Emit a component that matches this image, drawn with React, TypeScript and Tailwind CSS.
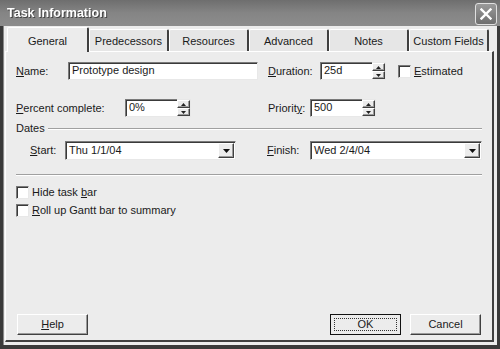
import React from "react";

const sunken = "bg-white border border-t-[#7a7a7a] border-l-[#7a7a7a] border-b-[#e8e8e8] border-r-[#e8e8e8] shadow-[inset_1px_1px_0_#3a3a3a]";
const raised = "bg-[#ececec] border border-t-white border-l-white border-b-[#404040] border-r-[#404040] shadow-[inset_-1px_-1px_0_#9a9a9a]";

function Spinner() {
    return (
        <div className="flex flex-col w-[14px] h-[18px] border-y border-r border-[#e8e8e8]">
            <div className={`${raised} flex-1 flex items-center justify-center`}>
                <svg width="5" height="3" viewBox="0 0 5 3"><polygon points="2.5,0 5,3 0,3" fill="#222" /></svg>
            </div>
            <div className={`${raised} flex-1 flex items-center justify-center`}>
                <svg width="5" height="3" viewBox="0 0 5 3"><polygon points="0,0 5,0 2.5,3" fill="#222" /></svg>
            </div>
        </div>
    );
}

function SpinBox ({ value, width }: { value: string; width: string }) {
    return (
        <div className="flex items-center">
            <div className={`${sunken} ${width} h-[18px] pl-[3px] leading-[15px] border-r-0`}>{value}</div>
            <Spinner />
        </div>
    );
}

function Combo ({ value, width }: { value: string; width: string }) {
    return (
        <div className={`${sunken} ${width} h-[19px] flex items-center`}>
            <span className="flex-1 pl-[3px] leading-[15px]">{value}</span>
            <div className={`${raised} w-[16px] h-[15px] mr-[1px] flex items-center justify-center`}>
                <svg width="7" height="4" viewBox="0 0 7 4"><polygon points="0,0 7,0 3.5,4" fill="#111" /></svg>
            </div>
        </div>
    );
}

function Check () {
    return <div className={`${sunken} w-[13px] h-[13px]`} />;
}

function Tab ({ label, selected }: { label: string; selected?: boolean }) {
    return (
        <div
            className={`flex items-center justify-center pt-[2px] border-l border-t border-r-2 border-l-white border-t-white border-r-[#404040] rounded-t-[2px] ${selected ? "h-[25px] w-[82px] bg-[#ececec] -mb-[1px] z-10" : "h-[22px] w-[80px] bg-[#e6e6e6]"}`}>
            {label}
        </div>
    );
}

export default function App () {
    return (
        <div className="w-[500px] h-[349px] bg-[#3a3a3a] flex flex-col font-['Liberation_Sans',Arial,sans-serif] text-[11px] text-[#1a1a1a] overflow-hidden">
            {/* title bar */}
            <div className="h-[26px] flex items-center bg-gradient-to-b from-[#6e6e6e] via-[#858585] to-[#8c8c8c] pl-[7px] pr-[3px]">
                <span className="flex-1 text-white font-bold text-[12.5px] drop-shadow-[1px_1px_0_#444]">Task Information</span>
                <div className="w-[22px] h-[22px] rounded-[3px] border border-[#e0e0e0] bg-gradient-to-b from-[#9a9a9a] to-[#6f6f6f] flex items-center justify-center mt-[2px]">
                    <svg width="12" height="12" viewBox="0 0 12 12"><path d="M1.5 1.5 L10.5 10.5 M10.5 1.5 L1.5 10.5" stroke="white" strokeWidth="2.4" strokeLinecap="square" /></svg>
                </div>
            </div>

            {/* body */}
            <div className="flex-1 mx-[3px] mb-[4px] bg-[#ececec] border-l border-[#8a8a8a] flex flex-col">
                {/* tabs */}
                <div className="flex items-end pl-[3px] h-[25px]">
                    <Tab label="General" selected />
                    <Tab label="Predecessors" />
                    <Tab label="Resources" />
                    <Tab label="Advanced" />
                    <Tab label="Notes" />
                    <Tab label="Custom Fields" />
                </div>

                {/* panel */}
                <div className="flex-1 ml-[1px] mr-[3px] mb-[3px] border-t border-l border-t-white border-l-white border-r-2 border-b-2 border-r-[#404040] border-b-[#404040] flex flex-col pl-[10px]">
                    {/* row 1 */}
                    <div className="flex items-center mt-[10px] h-[18px]">
                        <span className="w-[52px]"><u>N</u>ame:</span>
                        <div className={`${sunken} w-[190px] h-[18px] pl-[3px] leading-[15px]`}>Prototype design</div>
                        <span className="ml-[10px] w-[52px]"><u>D</u>uration:</span>
                        <SpinBox value="25d" width="w-[52px]" />
                        <div className="ml-[12px] flex items-center">
                            <Check />
                            <span className="ml-[3px]"><u>E</u>stimated</span>
                        </div>
                    </div>

                    {/* row 2 */}
                    <div className="flex items-center mt-[19px] h-[18px]">
                        <span className="w-[109px]"><u>P</u>ercent complete:</span>
                        <SpinBox value="0%" width="w-[52px]" />
                        <span className="ml-[77px] w-[42px]">Priorit<u>y</u>:</span>
                        <SpinBox value="500" width="w-[52px]" />
                    </div>

                    {/* dates group */}
                    <div className="flex items-center mt-[5px] h-[13px] mr-[10px]">
                        <span>Dates</span>
                        <div className="flex-1 ml-[3px] border-t border-b border-t-[#a0a0a0] border-b-white" />
                    </div>
                    <div className="flex items-center mt-[6px] h-[19px] pl-[14px]">
                        <span className="w-[35px]"><u>S</u>tart:</span>
                        <Combo value="Thu 1/1/04" width="w-[171px]" />
                        <span className="ml-[31px] w-[43px]"><u>F</u>inish:</span>
                        <Combo value="Wed 2/4/04" width="w-[172px]" />
                    </div>

                    <div className="mt-[14px] mr-[10px] border-t border-b border-t-[#a0a0a0] border-b-white" />

                    {/* checkboxes */}
                    <div className="flex items-center mt-[10px] h-[13px]">
                        <Check />
                        <span className="ml-[3px]">Hide task <u>b</u>ar</span>
                    </div>
                    <div className="flex items-center mt-[5px] h-[13px]">
                        <Check />
                        <span className="ml-[3px]"><u>R</u>oll up Gantt bar to summary</span>
                    </div>

                    <div className="flex-1" />

                    {/* buttons */}
                    <div className="flex items-center mb-[5px] pr-[11px]">
                        <div className={`${raised} w-[71px] h-[21px] flex items-center justify-center ml-[1px]`}><span><u>H</u>elp</span></div>
                        <div className="flex-1" />
                        <div className="w-[71px] h-[21px] border border-[#111] bg-[#ececec] flex items-center justify-center p-[3px]">
                            <div className="w-full h-full border border-dotted border-[#333] flex items-center justify-center">OK</div>
                        </div>
                        <div className={`${raised} w-[71px] h-[21px] flex items-center justify-center ml-[9px]`}>Cancel</div>
                    </div>
                </div>
            </div>
        </div>
    );
}
